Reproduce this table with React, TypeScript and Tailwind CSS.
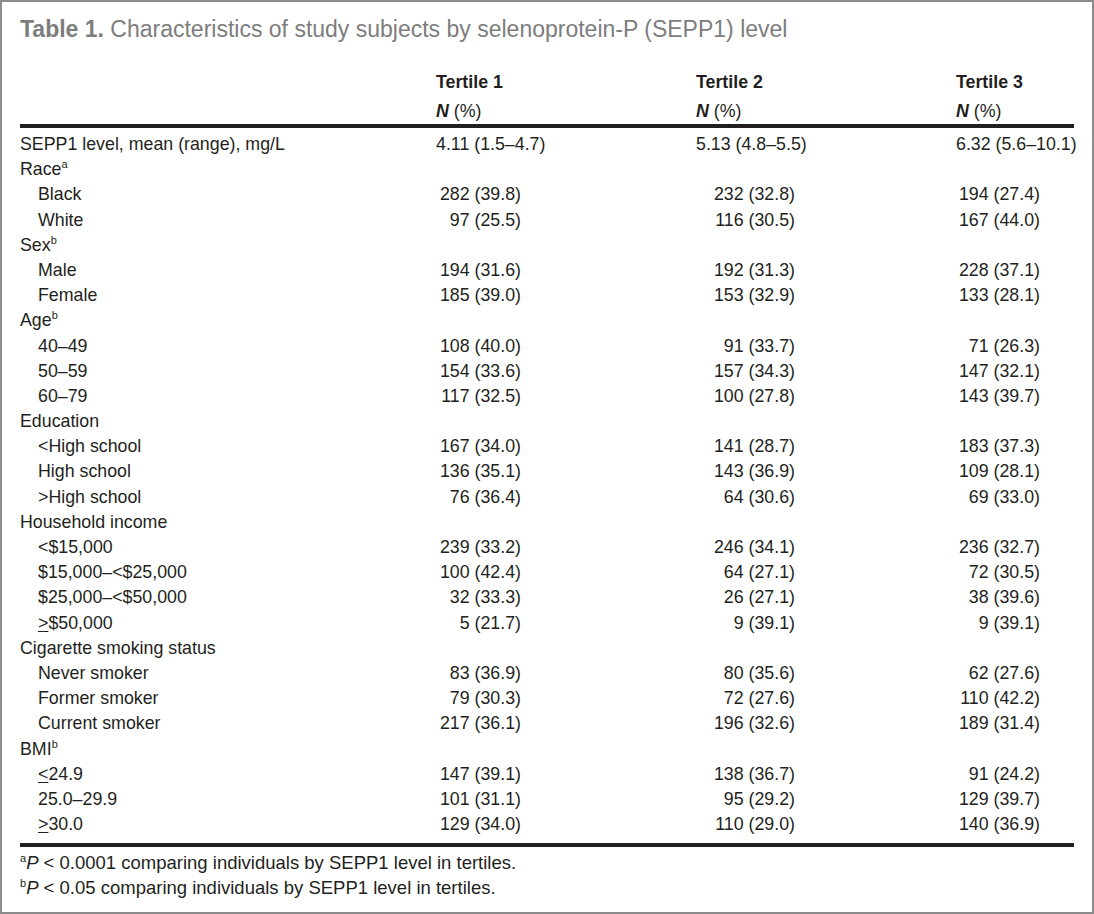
const rows: { label: string; indent?: boolean; sup?: string; sym?: string; values?: string[] }[] = [
  { label: "SEPP1 level, mean (range), mg/L", values: ["4.11 (1.5–4.7)", "5.13 (4.8–5.5)", "6.32 (5.6–10.1)"] },
  { label: "Race", sup: "a" },
  { label: "Black", indent: true, values: ["282 (39.8)", "232 (32.8)", "194 (27.4)"] },
  { label: "White", indent: true, values: ["97 (25.5)", "116 (30.5)", "167 (44.0)"] },
  { label: "Sex", sup: "b" },
  { label: "Male", indent: true, values: ["194 (31.6)", "192 (31.3)", "228 (37.1)"] },
  { label: "Female", indent: true, values: ["185 (39.0)", "153 (32.9)", "133 (28.1)"] },
  { label: "Age", sup: "b" },
  { label: "40–49", indent: true, values: ["108 (40.0)", "91 (33.7)", "71 (26.3)"] },
  { label: "50–59", indent: true, values: ["154 (33.6)", "157 (34.3)", "147 (32.1)"] },
  { label: "60–79", indent: true, values: ["117 (32.5)", "100 (27.8)", "143 (39.7)"] },
  { label: "Education" },
  { label: "<High school", indent: true, values: ["167 (34.0)", "141 (28.7)", "183 (37.3)"] },
  { label: "High school", indent: true, values: ["136 (35.1)", "143 (36.9)", "109 (28.1)"] },
  { label: ">High school", indent: true, values: ["76 (36.4)", "64 (30.6)", "69 (33.0)"] },
  { label: "Household income" },
  { label: "<$15,000", indent: true, values: ["239 (33.2)", "246 (34.1)", "236 (32.7)"] },
  { label: "$15,000–<$25,000", indent: true, values: ["100 (42.4)", "64 (27.1)", "72 (30.5)"] },
  { label: "$25,000–<$50,000", indent: true, values: ["32 (33.3)", "26 (27.1)", "38 (39.6)"] },
  { label: "$50,000", sym: ">", indent: true, values: ["5 (21.7)", "9 (39.1)", "9 (39.1)"] },
  { label: "Cigarette smoking status" },
  { label: "Never smoker", indent: true, values: ["83 (36.9)", "80 (35.6)", "62 (27.6)"] },
  { label: "Former smoker", indent: true, values: ["79 (30.3)", "72 (27.6)", "110 (42.2)"] },
  { label: "Current smoker", indent: true, values: ["217 (36.1)", "196 (32.6)", "189 (31.4)"] },
  { label: "BMI", sup: "b" },
  { label: "24.9", sym: "<", indent: true, values: ["147 (39.1)", "138 (36.7)", "91 (24.2)"] },
  { label: "25.0–29.9", indent: true, values: ["101 (31.1)", "95 (29.2)", "129 (39.7)"] },
  { label: "30.0", sym: ">", indent: true, values: ["129 (34.0)", "110 (29.0)", "140 (36.9)"] },
]

// right edge of the numbers inside each tertile column
const valueWidths = ["w-[85px]", "w-[99px]", "w-[84px]"]

export default function App() {
  return (
    <div
      className="w-[1094px] h-[914px] border-2 border-[#8c8c8c] bg-white text-[#231f20] px-[18px] pt-[14px]"
      style={{ fontFamily: '"Liberation Sans", Arial, sans-serif' }}
    >
      <h1 className="text-[23px] leading-[26px] text-[#7d7d7d]">
        <span className="font-bold">Table 1.</span> Characteristics of study subjects by selenoprotein-P (SEPP1) level
      </h1>

      <div className="mt-[28px] w-[1054px] text-[17.8px]">
        <div className="grid grid-cols-[416px_260px_260px_118px]">
          <div />
          {["Tertile 1", "Tertile 2", "Tertile 3"].map((t) => (
            <div key={t} className="leading-[25px] font-bold">
              {t}
            </div>
          ))}
          <div />
          {[0, 1, 2].map((i) => (
            <div key={i} className="leading-[25px] mt-[4px]">
              <span className="italic font-bold">N</span> (%)
            </div>
          ))}
        </div>

        <div className="h-[4px] bg-[#231f20]" />

        <div className="pt-[3px] pb-[7px]">
          {rows.map((r, ri) => (
            <div key={r.label} className="grid grid-cols-[416px_260px_260px_118px] h-[25.2px] items-center">
              <div className={r.indent ? "pl-[18px]" : ""}>
                {r.sym && <span className="underline underline-offset-[2px]">{r.sym}</span>}
                {r.label}
                {r.sup && <sup className="text-[11px] -top-[7px]">{r.sup}</sup>}
              </div>
              {r.values
                ? r.values.map((v, i) => (
                    <div key={i} className={ri === 0 ? "whitespace-nowrap" : `${valueWidths[i]} text-right whitespace-nowrap`}>
                      {v}
                    </div>
                  ))
                : null}
            </div>
          ))}
        </div>

        <div className="h-[4px] bg-[#231f20]" />

        <div className="pt-[3px] leading-[25px] text-[18.5px]">
          <p>
            <sup className="text-[11px] -top-[7px]">a</sup>
            <span className="italic">P</span> &lt; 0.0001 comparing individuals by SEPP1 level in tertiles.
          </p>
          <p>
            <sup className="text-[11px] -top-[7px]">b</sup>
            <span className="italic">P</span> &lt; 0.05 comparing individuals by SEPP1 level in tertiles.
          </p>
        </div>
      </div>
    </div>
  )
}
